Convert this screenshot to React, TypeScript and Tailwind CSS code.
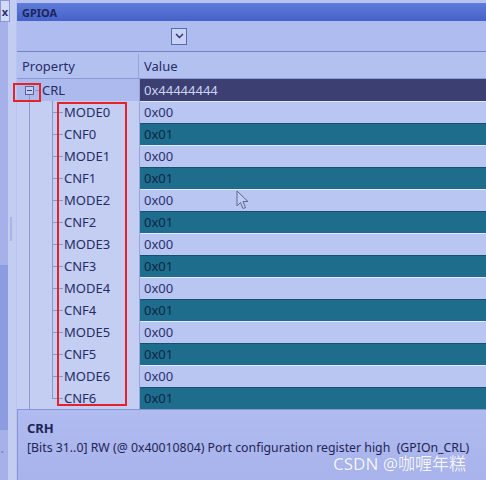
import React from 'react'

const ROWS = [
  'MODE0', 'CNF0', 'MODE1', 'CNF1', 'MODE2', 'CNF2', 'MODE3',
  'CNF3', 'MODE4', 'CNF4', 'MODE5', 'CNF5', 'MODE6', 'CNF6',
]

function Sidebar() {
  return (
    <div className="relative flex h-full w-[16px] shrink-0 bg-[#c3ccf1]">
      <div className="flex w-[8px] flex-col bg-[#a6b1ea]">
        <div className="h-[265px]" />
        <div className="h-[165px] bg-[#8d9be0]" />
      </div>
      <div className="absolute left-0 top-0 flex h-[22px] w-[10px] items-center justify-center border border-[#8a96d6] bg-[#d3daf6] text-[11px] font-bold leading-none text-[#2a3070]">
        x
      </div>
      <div className="absolute left-[10px] top-[217px] h-[24px] w-[2px] bg-[#aab4e8]" />
      <div className="absolute left-[1px] top-[450px] text-[9px] leading-none text-[#3a4080]">˅</div>
    </div>
  )
}

function TreeRow({ name, last }: { name: string; last: boolean }) {
  return (
    <div className="relative flex h-[22px] items-center bg-[#c4cef2]">
      <div className="absolute left-[12px] top-0 h-[22px] w-px bg-[#8e98c8]" />
      <div className={`absolute left-[35px] top-0 w-px bg-[#8e98c8] ${last ? 'h-[11px]' : 'h-[22px]'}`} />
      <div className="absolute left-[35px] top-[11px] h-px w-[11px] bg-[#8e98c8]" />
      <span className="pl-[47px] text-[13px] leading-none text-[#262c66]">{name}</span>
    </div>
  )
}

function ValueRow({ value, dark }: { value: string; dark: boolean }) {
  return (
    <div
      className={`flex h-[22px] items-center border-t px-[4px] text-[13px] leading-none ${
        dark
          ? 'border-[#17506e] bg-[#1f6d8c] text-[#0d2744]'
          : 'border-[#e2e8fb] bg-[#bac6f2] text-[#283070]'
      }`}
    >
      {value}
    </div>
  )
}

export default function App() {
  return (
    <div
      className="relative flex h-[480px] w-[486px] overflow-hidden bg-[#b8c3f0]"
      style={{ fontFamily: '"Noto Sans", "Open Sans", sans-serif' }}
    >
      <Sidebar />

      <div className="flex min-w-0 flex-1 flex-col pl-[1px]">
        {/* title */}
        <div className="mt-[3px] flex h-[18px] items-center bg-gradient-to-b from-[#5f7ddb] to-[#4661c9] px-[5px]">
          <span className="text-[11px] font-bold leading-none text-[#1c2458]">GPIOA</span>
        </div>

        {/* toolbar */}
        <div className="flex h-[31px] items-center border-b border-[#7383c6] bg-[#aebcef]">
          <div className="ml-[154px] flex h-[17px] w-[16px] items-center justify-center border border-[#5c6aa8] bg-[#c9d2f4]">
            <svg width="9" height="6" viewBox="0 0 9 6">
              <path d="M1 1 L4.5 4.5 L8 1" fill="none" stroke="#273070" strokeWidth="1.4" />
            </svg>
          </div>
        </div>

        {/* header */}
        <div className="flex h-[27px] items-center border-b border-[#8a98d6] bg-[#b3c1f0] pt-[2px] text-[13px] leading-none text-[#262c66]">
          <div className="flex h-full w-[122px] items-center border-r border-[#97a4dc] pl-[5px]">Property</div>
          <div className="pl-[5px]">Value</div>
        </div>

        {/* grid */}
        <div className="flex">
          <div className="w-[123px] shrink-0 border-r border-[#97a4dc]">
            <div className="relative flex h-[22px] items-center bg-[#adbaee]">
              <div className="absolute left-[8px] top-[7px] flex h-[9px] w-[9px] items-center justify-center border border-[#5a6194] bg-[#c6cff2]">
                <div className="h-px w-[5px] bg-[#3a4078]" />
              </div>
              <div className="absolute left-[12px] top-[16px] h-[6px] w-px bg-[#8e98c8]" />
              <div className="absolute left-[18px] top-[11px] h-px w-[6px] bg-[#8e98c8]" />
              <span className="pl-[25px] text-[13px] leading-none text-[#262c66]">CRL</span>
            </div>
            {ROWS.map((r, i) => (
              <TreeRow key={r} name={r} last={i === ROWS.length - 1} />
            ))}
          </div>
          <div className="min-w-0 flex-1">
            <div className="flex h-[22px] items-center bg-[#3b3f72] px-[4px] text-[13px] leading-none text-[#cdd3f2]">
              0x44444444
            </div>
            {ROWS.map((r, i) => (
              <ValueRow key={r} value={i % 2 === 0 ? '0x00' : '0x01'} dark={i % 2 === 1} />
            ))}
          </div>
        </div>

        {/* description */}
        <div className="flex flex-1 flex-col border-l border-t border-[#8494d4] bg-gradient-to-b from-[#b0bbf0] to-[#a8b3ec] px-[9px] pt-[8px] text-[#1e2455]">
          <div className="text-[13px] font-bold leading-[20px]">CRH</div>
          <div className="whitespace-nowrap text-[12.3px] leading-[20px]">
            [Bits 31..0] RW (@ 0x40010804) Port configuration register high&nbsp; (GPIOn_CRL)
          </div>
        </div>
      </div>

      {/* annotations */}
      <div className="absolute left-[13px] top-[83px] h-[19px] w-[28px] border-2 border-[#e5222b]" />
      <div className="absolute left-[57px] top-[102px] h-[304px] w-[70px] border-2 border-[#e5222b]" />

      {/* mouse cursor */}
      <svg className="absolute left-[236px] top-[190px]" width="14" height="20" viewBox="0 0 14 20">
        <path
          d="M1 1 L1 16 L4.5 12.5 L7 18.5 L9.5 17.5 L7 11.5 L12 11.5 Z"
          fill="#c3ccf2"
          stroke="#5e6690"
          strokeWidth="1"
          strokeLinejoin="round"
        />
      </svg>

      {/* watermark */}
      <div
        className="absolute left-[333px] top-[455px] text-[17px] leading-none text-[#f3f5ff]"
        style={{ fontFamily: '"Noto Sans", "Noto Sans CJK SC", sans-serif', textShadow: '0 0 1px #8a94c8' }}
      >
        CSDN @咖喱年糕
      </div>
    </div>
  )
}
